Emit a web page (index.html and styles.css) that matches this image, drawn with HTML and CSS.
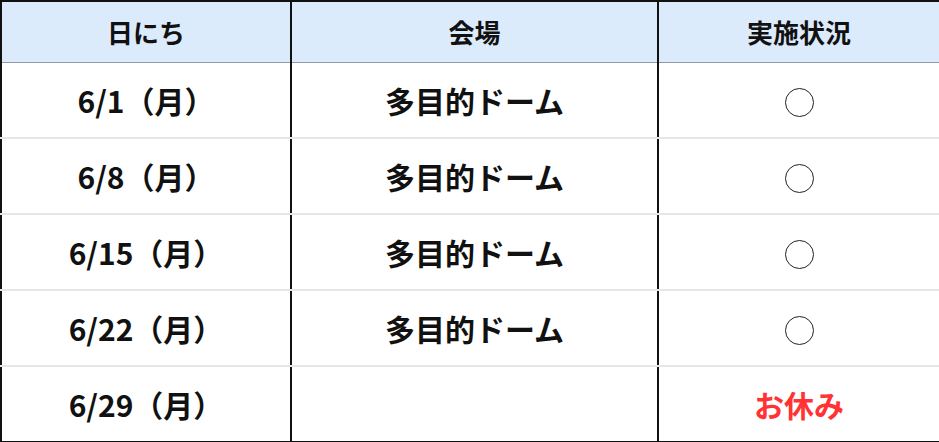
FILE: index.html
```html
<!DOCTYPE html>
<html lang="ja">
<head>
<meta charset="utf-8">
<link rel="stylesheet" href="styles.css">
</head>
<body>
<table class="schedule">
  <colgroup>
    <col class="c1"><col class="c2"><col class="c3">
  </colgroup>
  <thead>
    <tr><th>日にち</th><th>会場</th><th>実施状況</th></tr>
  </thead>
  <tbody>
    <tr><td>6/1（月）</td><td>多目的ドーム</td><td><span class="mark"></span></td></tr>
    <tr><td>6/8（月）</td><td>多目的ドーム</td><td><span class="mark"></span></td></tr>
    <tr><td>6/15（月）</td><td>多目的ドーム</td><td><span class="mark"></span></td></tr>
    <tr><td>6/22（月）</td><td>多目的ドーム</td><td><span class="mark"></span></td></tr>
    <tr><td>6/29（月）</td><td></td><td class="off">お休み</td></tr>
  </tbody>
</table>
</body>
</html>
```
FILE: styles.css
```css
html, body {
  margin: 0;
  padding: 0;
  background: #fff;
}
.schedule {
  width: 939px;
  border-collapse: collapse;
  table-layout: fixed;
  border: 2px solid #111;
  font-family: "Noto Sans CJK JP", "Noto Sans", sans-serif;
  font-weight: bold;
  color: #111;
}
.c1 { width: 290px; }
.c2 { width: 367px; }
.c3 { width: 282px; }
.schedule th {
  height: 60px;
  background: #dcebfc;
  font-size: 26px;
  line-height: 1;
  border-left: 2px solid #111;
  border-right: 2px solid #111;
  border-bottom: 1px solid #8e9aa6;
  padding: 0;
  text-align: center;
  vertical-align: middle;
}
.schedule td {
  height: 74px;
  font-size: 30px;
  line-height: 1;
  border-left: 2px solid #111;
  border-right: 2px solid #111;
  border-bottom: 2px solid #e6e6e6;
  padding: 0;
  text-align: center;
  vertical-align: middle;
}
.schedule tbody tr:last-child td {
  border-bottom: 2px solid #111;
}
.mark {
  display: inline-block;
  width: 27px;
  height: 27px;
  border: 1.5px solid #222;
  border-radius: 50%;
  vertical-align: middle;
}
.schedule td.off {
  color: #ff3333;
}
```
